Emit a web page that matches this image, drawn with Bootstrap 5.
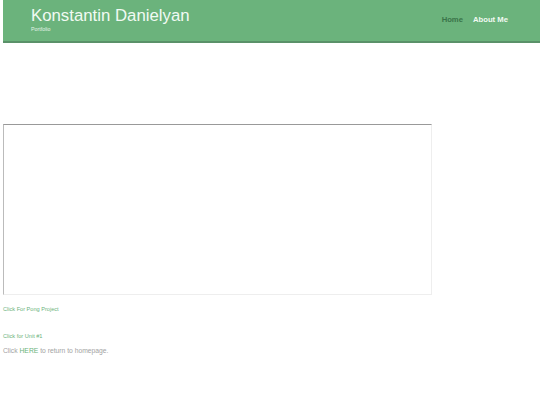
<!DOCTYPE html>
<html lang="en">
<head>
<meta charset="utf-8">
<title>Konstantin Danielyan</title>
<link href="https://cdn.jsdelivr.net/npm/bootstrap@5.3.0/dist/css/bootstrap.min.css" rel="stylesheet">
<style>
body { font-family: "Liberation Sans", Arial, sans-serif; color: #999; background: #fff; padding-left: 3px; font-size: 7px; line-height: 1.2; }
.site-head { background: #6bb37c; border-bottom: 2px solid #5a9169; height: 43px; padding: 6px 32px 0 28px; }
.site-title { font-size: 16.8px; line-height: 20px; color: #f1faf3; margin: 0; font-weight: 400; }
.site-sub { font-size: 5.3px; line-height: 6px; color: #e4f3e8; margin: 0; }
.site-nav { gap: 10px; margin-top: 9px; font-size: 7.7px; font-weight: 700; line-height: 10px; }
.site-nav a { color: #f1faf3; text-decoration: none; }
.site-nav a.active { color: #3a7449; }
.frame-box { display: block; width: 429px; height: 171px; margin-top: 81px; border-style: solid; border-width: 1px; border-color: #999999 #eeeeee #eeeeee #bbbbbb; background: #fff; }
.small-link { color: #6bb37c; text-decoration: none; font-size: 5.6px; line-height: 6px; display: block; }
.link-a { margin-top: 11px; }
.link-b { margin-top: 21px; }
.back-line { font-size: 6.75px; line-height: 9px; margin: 7px 0 0 0; color: #a3a3a3; }
.back-line a { color: #6bb37c; text-decoration: none; }
</style>
</head>
<body class="m-0">
<header class="site-head d-flex justify-content-between align-items-start">
  <div>
    <h1 class="site-title">Konstantin Danielyan</h1>
    <p class="site-sub">Portfolio</p>
  </div>
  <nav class="site-nav d-flex">
    <a class="active" href="#">Home</a>
    <a href="#">About Me</a>
  </nav>
</header>
<main>
  <div class="frame-box"></div>
  <a class="small-link link-a" href="#">Click For Pong Project</a>
  <a class="small-link link-b" href="#">Click for Unit #1</a>
  <p class="back-line">Click <a href="#">HERE</a> to return to homepage.</p>
</main>
<script src="https://cdn.jsdelivr.net/npm/bootstrap@5.3.0/dist/js/bootstrap.bundle.min.js"></script>
</body>
</html>
